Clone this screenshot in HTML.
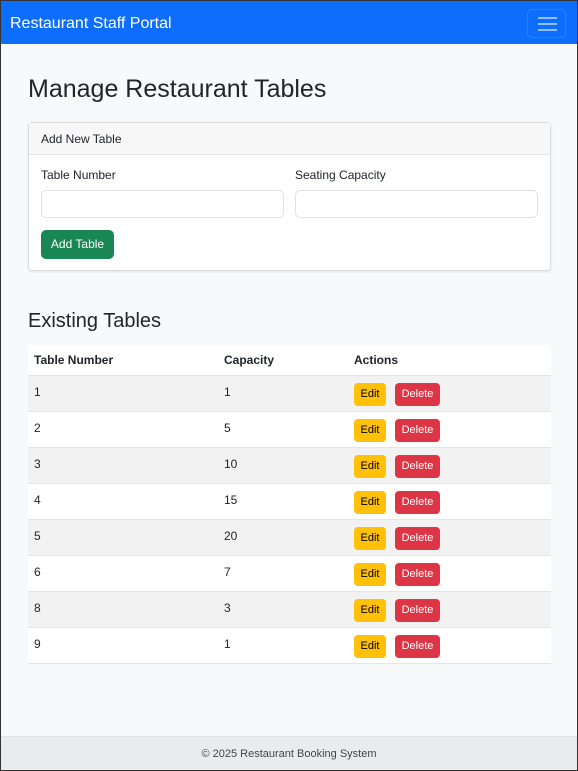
<!DOCTYPE html>
<html><head><style>
*{box-sizing:border-box;margin:0;padding:0}
body{width:578px;height:771px;background:#f8f9fa;font-family:"Liberation Sans",sans-serif;color:#212529;border:1px solid #333;position:relative;overflow:hidden}
.nav{position:absolute;left:0;top:0;right:0;height:43px;background:#0d6efd;color:#fff}
.nav .b{position:absolute;left:9px;top:14px;font-size:16px}
.tog{position:absolute;left:526px;top:8px;width:39px;height:29px;border:1px solid rgba(255,255,255,.12);border-radius:5px}
.tog i{position:absolute;left:10px;width:19px;height:2px;background:rgba(255,255,255,.55)}
h1{position:absolute;left:27px;top:74px;font-size:25px;font-weight:400}
.card{position:absolute;left:27px;top:121px;width:523px;height:149px;background:#fff;border:1px solid #dcdcdc;border-radius:4px;box-shadow:0 1px 2px rgba(0,0,0,.08)}
.ch{height:32px;background:#f7f7f7;border-bottom:1px solid #e5e5e5;font-size:12px;padding:9px 12px}
.lab{position:absolute;top:45px;font-size:12px}
.inp{position:absolute;top:67px;width:243px;height:28px;border:1px solid #dee2e6;border-radius:5px}
.btn{position:absolute;left:12px;top:107px;width:73px;height:29px;background:#198754;color:#fff;border-radius:5px;font-size:12px;text-align:center;line-height:29px}
h2{position:absolute;left:27px;top:309px;font-size:20px;font-weight:400}
table{position:absolute;left:27px;top:344px;width:523px;border-collapse:collapse;font-size:12px;background:#fff}
th{height:30px;text-align:left;padding:0 6px;font-weight:bold;border-bottom:1px solid #e5e5e5}
td{height:36px;padding:0 6px;vertical-align:top;padding-top:9px;border-bottom:1px solid #e5e5e5}
tr:nth-child(odd) td{background:#f2f2f2}
.e,.d{display:inline-block;height:23px;line-height:23px;border-radius:4px;font-size:11px;text-align:center;margin-top:-2px}
.e{background:#ffc107;color:#000;width:32px}
.d{background:#dc3545;color:#fff;width:45px;margin-left:9px}
.f{position:absolute;left:0;right:0;top:735px;bottom:0;background:#e9ecef;border-top:1px solid #dee2e6;text-align:center;font-size:11px;color:#444;padding-top:11px}
</style></head><body>
<div class="nav"><span class="b">Restaurant Staff Portal</span><div class="tog"><i style="top:7px"></i><i style="top:13px"></i><i style="top:19px"></i></div></div>
<h1>Manage Restaurant Tables</h1>
<div class="card"><div class="ch">Add New Table</div>
<span class="lab" style="left:12px">Table Number</span><span class="lab" style="left:266px">Seating Capacity</span>
<div class="inp" style="left:12px"></div><div class="inp" style="left:266px"></div>
<div class="btn">Add Table</div></div>
<h2>Existing Tables</h2>
<table>
<thead><tr><th style="width:190px">Table Number</th><th style="width:130px">Capacity</th><th>Actions</th></tr></thead>
<tbody>
<tr><td>1</td><td>1</td><td><span class="e">Edit</span><span class="d">Delete</span></td></tr>
<tr><td>2</td><td>5</td><td><span class="e">Edit</span><span class="d">Delete</span></td></tr>
<tr><td>3</td><td>10</td><td><span class="e">Edit</span><span class="d">Delete</span></td></tr>
<tr><td>4</td><td>15</td><td><span class="e">Edit</span><span class="d">Delete</span></td></tr>
<tr><td>5</td><td>20</td><td><span class="e">Edit</span><span class="d">Delete</span></td></tr>
<tr><td>6</td><td>7</td><td><span class="e">Edit</span><span class="d">Delete</span></td></tr>
<tr><td>8</td><td>3</td><td><span class="e">Edit</span><span class="d">Delete</span></td></tr>
<tr><td>9</td><td>1</td><td><span class="e">Edit</span><span class="d">Delete</span></td></tr>
</tbody></table>
<div class="f">© 2025 Restaurant Booking System</div>
</body></html>
